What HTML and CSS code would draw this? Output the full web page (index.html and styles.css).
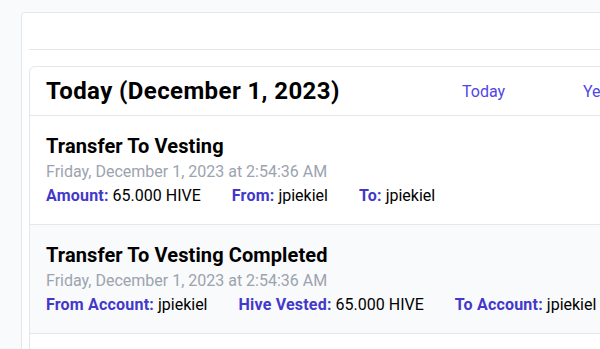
FILE: index.html
```html
<html lang="en">
  <head>
    <meta charset="UTF-8" />
    <meta name="viewport" content="width=device-width, initial-scale=1.0" />
    <title>Operations</title>
    <link rel="stylesheet" href="styles.css">
  </head>

  <body>
    <div class="page">
      <div class="panel">
        <div class="panel-head"></div>
        <section class="day">
          <header class="day-head">
            <h2>Today (December 1, 2023)</h2>
            <nav class="day-nav">
              <a href="#">Today</a>
              <a href="#">Yesterday</a>
            </nav>
          </header>
          <ul class="ops">
            <li class="op">
              <h3>Transfer To Vesting</h3>
              <p class="time">Friday, December 1, 2023 at 2:54:36 AM</p>
              <div class="fields">
                <span><b>Amount:</b> 65.000 HIVE</span>
                <span><b>From:</b> jpiekiel</span>
                <span><b>To:</b> jpiekiel</span>
              </div>
            </li>
            <li class="op">
              <h3>Transfer To Vesting Completed</h3>
              <p class="time">Friday, December 1, 2023 at 2:54:36 AM</p>
              <div class="fields">
                <span><b>From Account:</b> jpiekiel</span>
                <span><b>Hive Vested:</b> 65.000 HIVE</span>
                <span><b>To Account:</b> jpiekiel</span>
              </div>
            </li>
            <li class="op"></li>
          </ul>
        </section>
      </div>
    </div>
  </body>
</html>
```

FILE: styles.css
```css
body {
  margin: 0;
  background-color: #f9fafb;
  font-family: Roboto, "Noto Sans", sans-serif;
  color: #000;
  overflow: hidden;
}

.page {
  padding: 12px 0 0 21px;
}

.panel {
  width: 720px;
  min-height: 400px;
  background-color: #fff;
  border: 1px solid #e5e7eb;
  border-radius: 4px;
  padding: 0 7px;
}

.panel-head {
  height: 36px;
  border-bottom: 1px solid #e5e7eb;
}

.day {
  margin-top: 16px;
  border: 1px solid #e5e7eb;
  border-radius: 6px;
}

.day-head {
  display: flex;
  align-items: center;
  padding: 8px 16px;
  border-bottom: 1px solid #e5e7eb;
}

.day-head h2 {
  flex: 0 0 416px;
  margin: 0;
  font-size: 24px;
  line-height: 32px;
  font-weight: 700;
  letter-spacing: 0.4px;
}

.day-nav {
  display: flex;
}

.day-nav a {
  width: 121px;
  font-size: 16px;
  color: #4f46e5;
  text-decoration: none;
}

.ops {
  list-style: none;
  margin: 0;
  padding: 0;
}

.op {
  padding: 16px;
  border-bottom: 1px solid #e5e7eb;
}

.op:nth-child(even) {
  background-color: #f9fafb;
}

.op h3 {
  margin: 0;
  font-size: 20px;
  line-height: 28px;
  font-weight: 700;
  letter-spacing: 0.1px;
}

.op .time {
  margin: 0;
  font-size: 16px;
  line-height: 24px;
  color: #9ca3af;
}

.fields {
  display: flex;
  gap: 31px;
  font-size: 16px;
  line-height: 24px;
}

.fields b {
  color: #4338ca;
  font-weight: 700;
  letter-spacing: 0.2px;
}
```
